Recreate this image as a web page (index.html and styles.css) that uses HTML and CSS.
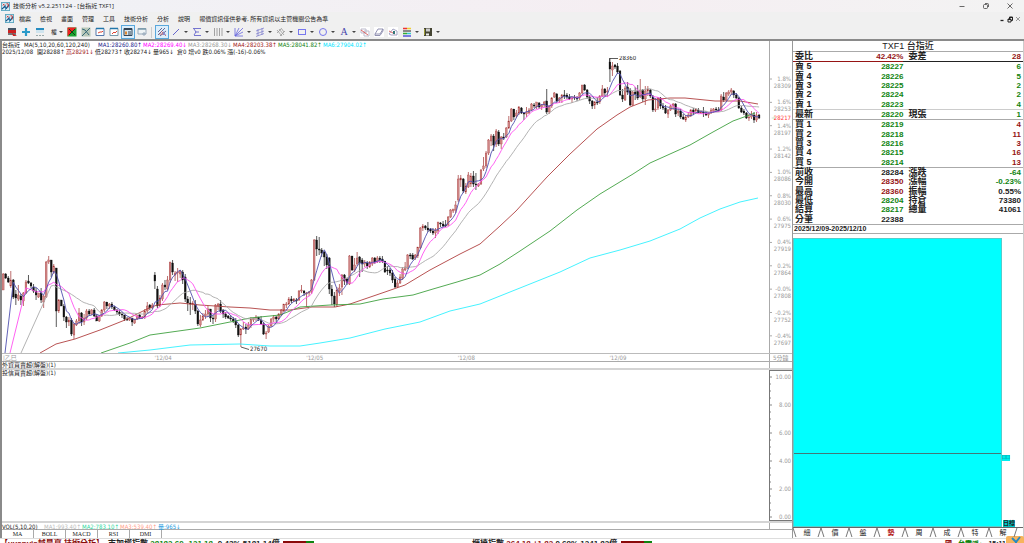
FILE: index.html
```html
<!DOCTYPE html>
<html lang="zh-Hant">

<head>
    <meta charset="UTF-8">
    <meta name="viewport" content="width=device-width, initial-scale=1.0">
    <title>技術分析 v5.2.251124 - [台指近 TXF1]</title>
    <link rel="stylesheet" href="styles.css">
</head>

<body>

    <!-- Shared icons -->
    <svg class="defs" aria-hidden="true">
        <symbol id="app" viewBox="0 0 10 10">
            <rect x=".5" y=".5" width="9" height="9" fill="#d5ecf4" stroke="#5aa6c0"/>
            <path d="M1 8L4 5L6 7L9 3" fill="none" stroke="#1c4f80" stroke-width="1.3"/>
            <path d="M2 2L4 4M4 2L2 4M6 2h2v4" fill="none" stroke="#c33" stroke-width="1"/>
            <path d="M3 6h4M5 3v6" stroke="#2577a8" stroke-width=".8"/>
        </symbol>
    </svg>

    <!-- Title Bar -->
    <header class="title-bar">
        <svg class="app-icon"><use href="#app"/></svg>
        <h1>技術分析 v5.2.251124 - [台指近 TXF1]</h1>
        <div class="window-buttons">
            <button aria-label="最小化"><svg viewBox="0 0 8 8"><path d="M1.5 4.5h5"/></svg></button>
            <button aria-label="還原"><svg viewBox="0 0 8 8"><rect x="1.5" y="2.5" width="4" height="4" rx="1"/><path d="M3 1.5h2.5q1 0 1 1V5"/></svg></button>
            <button aria-label="關閉"><svg viewBox="0 0 8 8"><path d="M1.5 1.5l5 5M6.5 1.5l-5 5"/></svg></button>
        </div>
    </header>

    <!-- Menu -->
    <nav class="menu-bar">
        <svg class="app-icon"><use href="#app"/></svg>
        <button>檔案</button>
        <button>檢視</button>
        <button>畫面</button>
        <button>管理</button>
        <button>工具</button>
        <button>技術分析</button>
        <button>分析</button>
        <button>說明</button>
        <span>報價資訊僅供參考, 所有資訊以主管機關公告為準</span>
        <div class="mdi-buttons">
            <button aria-label="最小化視窗"><svg viewBox="0 0 8 8"><path d="M2.5 5.5h3" stroke="#222" stroke-width="1.3"/></svg></button>
            <button aria-label="還原視窗"><svg viewBox="0 0 8 8"><path d="M2 4h3v3H2zM3.5 4V2h3v3.500H5M2 4.500h3M3.500 2.500h3" fill="none" stroke="#222"/></svg></button>
            <button aria-label="關閉視窗"><svg viewBox="0 0 8 8"><path d="M2 2l4 4M6 2l-4 4" stroke="#999"/></svg></button>
        </div>
    </nav>

    <!-- Toolbar -->
    <div class="toolbar">
        <button aria-label="報價"><svg viewBox="0 0 10 10"><path d="M1 1h8v2H1z" fill="#456"/><path d="M1 3h8v3H1z" fill="#c22"/><path d="M1 6h8v2H1z" fill="#777"/><path d="M5 6l5 3H6z" fill="#c22"/></svg></button>
        <button aria-label="新增"><svg viewBox="0 0 10 10"><path d="M5 1v8M1 5h8" stroke="#2b9ac9" stroke-width="2.200"/></svg></button>
        <button aria-label="視窗"><svg viewBox="0 0 10 10"><path d="M1 1h8v2H1z" fill="#268cc0"/><path d="M1 3h8v3H1z" fill="#cfe4ee"/><path d="M1 8.500h8" stroke="#9aa" stroke-dasharray="2 1"/></svg></button>
        <button class="short" aria-label="權值"><span>權</span><i></i></button>
        <button aria-label="漲跌"><svg viewBox="0 0 10 10"><path d="M.5.5h9v9h-9z" fill="#1ca332"/><path d="M.5.5h9l-9 9z" fill="#e22"/><path d="M2 2l6 6M8 2L2 8" stroke="#141" stroke-width="1"/></svg></button>
        <button aria-label="線圖"><svg viewBox="0 0 10 10"><path d="M.5.5h9v9h-9z" fill="#b9c8b9"/><path d="M1 9l8-8M1 2l3 1 4 5" fill="none" stroke="#386a78" stroke-width="1"/></svg></button>
        <button aria-label="分時"><svg viewBox="0 0 10 10"><path d="M1 1.500h8v7H1z" fill="#fff" stroke="#57a"/><path d="M1 1.500h8" stroke="#27a" stroke-width="1.500"/><path d="M3 6l2-1 2 0 1-1" fill="none" stroke="#d43"/></svg></button>
        <button aria-label="日線"><svg viewBox="0 0 10 10"><path d="M1 1.500h8v7H1z" fill="#fff" stroke="#79a"/><path d="M1 1.500h8" stroke="#27a" stroke-width="1.500"/><path d="M3 7l2-2 1 1 2-2" fill="none" stroke="#d43"/></svg></button>
        <button class="on" aria-label="資訊"><svg viewBox="0 0 10 10"><path d="M1 1.500h8v7H1z" fill="#d8e9f4" stroke="#345"/><path d="M1 2h8" stroke="#345" stroke-width="2"/><path d="M2 4.500h2v3H2z" fill="#d83"/><path d="M5 5h3M5 7h3" stroke="#345"/></svg></button>
        <button aria-label="列表"><svg viewBox="0 0 10 10"><path d="M1 1.500h8v5.500H1z" fill="#eef3f5" stroke="#9ab"/><path d="M1 2h8" stroke="#79a" stroke-width="1.500"/><path d="M7 5v4M5 7h4" stroke="#9ab"/></svg></button>
        <hr>
        <button class="on" aria-label="畫線"><svg viewBox="0 0 10 10"><path d="M1 8L8 1M1 5l4-4M3 9l6-5" stroke="#558" stroke-width=".9"/><path d="M2 7h6M4 4l5 5" stroke="#c55" stroke-width=".8"/><path d="M6 4l3 4H6z" fill="#88c"/></svg></button>
        <button class="drop" aria-label="直線"><svg viewBox="0 0 10 10"><path d="M2 8l6-6" stroke="#66c"/></svg><i></i></button>
        <button class="drop" aria-label="水平線"><svg viewBox="0 0 10 10"><path d="M1 1.500h8M3 5h4M2 8.500h7M2 2l2 3-2 3" fill="none" stroke="#66c" stroke-width=".9"/></svg><i></i></button>
        <button class="drop" aria-label="垂直線"><svg viewBox="0 0 10 10"><path d="M1.500 1v8M4 1v8M6.500 1v8M9 1v8" stroke="#999" stroke-width=".9"/></svg><i></i></button>
        <button class="drop" aria-label="扇形線"><svg viewBox="0 0 10 10"><path d="M1 1v8h8M1 9l8-8M1 9l4-8M1 9l8-4" fill="none" stroke="#66d" stroke-width=".8"/></svg><i></i></button>
        <button class="drop" aria-label="平行線"><svg viewBox="0 0 10 10"><path d="M1 4l8-3M1 7l8-3M1 9.500l8-3M3 2v7M7 1v7" stroke="#77c" stroke-width=".7"/></svg><i></i></button>
        <button class="drop" aria-label="角度線"><svg viewBox="0 0 10 10"><path d="M1 3l5 6M3 2l5 6M5 1l3 4M1 6l4-4M4 9l5-5" stroke="#999" stroke-width=".8"/></svg><i></i></button>
        <button class="drop" aria-label="矩形"><svg viewBox="0 0 10 10"><rect x="1.500" y="2.500" width="7" height="5" fill="none" stroke="#77e"/></svg><i></i></button>
        <button class="drop" aria-label="圓形"><svg viewBox="0 0 10 10"><circle cx="5" cy="5" r="3.500" fill="none" stroke="#77e"/></svg><i></i></button>
        <button class="drop letter" aria-label="文字"><span>A</span><i></i></button>
        <button aria-label="複製"><svg class="paper" viewBox="0 0 10 10"><path d="M1 2h5v4H1zM4 4h5v5H4z" fill="#fff" stroke="#bbc"/><path d="M1 3l7 5" stroke="#d66"/></svg></button>
        <button aria-label="橡皮擦"><svg class="paper" viewBox="0 0 10 10"><path d="M1 7l3-5h5L6 7zM1 7v1.500h5L9 4V2" fill="none" stroke="#88a" stroke-width=".9"/></svg></button>
        <button aria-label="全部清除"><svg class="paper" viewBox="0 0 10 10"><path d="M1 7l4-5 4 2v4H3z" fill="none" stroke="#99b" stroke-width=".9"/><path d="M1 4l6 3" stroke="#d66"/><path d="M5 4h2v3H5z" fill="#377"/></svg></button>
        <button class="drop" aria-label="顏色"><svg viewBox="0 0 10 10"><path d="M1 1.500h4" stroke="#e33" stroke-width="1.500"/><path d="M5 1.500h4" stroke="#ec3" stroke-width="1.500"/><path d="M1 4h8" stroke="#222"/><path d="M1 6.500h4" stroke="#3a3" stroke-width="1.500"/><path d="M5 6.500h4" stroke="#3cc" stroke-width="1.500"/><path d="M1 9h8" stroke="#55d" stroke-width="1.500"/></svg><i></i></button>
        <button class="drop" aria-label="儲存"><svg viewBox="0 0 10 10"><path d="M1 1h8v8H1z" fill="#443"/><path d="M3 1.500h4v3H3z" fill="#ccc"/><path d="M3 6.500h3v2H3z" fill="#eee"/><path d="M1.500 2v6" stroke="#993"/></svg><i></i></button>
    </div>

    <main class="workspace">

        <!-- Charts -->
        <section class="charts">
            <div class="price-row">
                <div class="price-chart">
                    <p class="legend">
                        <span class="symbol">台指近</span><span class="params">MA(5,10,20,60,120,240)</span>
                        <span class="ma navy">MA1:28260.80↑</span>
                        <span class="ma magenta">MA2:28269.40↓</span>
                        <span class="ma gray">MA3:28268.30↓</span>
                        <span class="ma maroon">MA4:28203.38↑</span>
                        <span class="ma green">MA5:28041.82↑</span>
                        <span class="ma cyan">MA6:27904.02↑</span>
                    </p>
                    <p class="legend">
                        <span class="date">2025/12/08</span>
                        <span class="quote">開28288↑</span>
                        <span class="quote maroon">高28291↓</span>
                        <span class="quote">低28273↑</span>
                        <span class="quote">收28274↓</span>
                        <span class="volume">量965↓</span>
                        <span class="rest">倉0 增v0 跌0.06% 漲(-16)-0.06%</span>
                    </p>
                    <svg id="candles" viewBox="2 56 767 297"></svg>
                </div>
                <svg id="price-axis" class="axis" viewBox="770 41 22 312"></svg>
            </div>
            <div class="strip dates">
                <div class="days">
                    <span>|乙巳</span><span>'12/04</span><span>'12/05</span><span>'12/08</span><span>'12/09</span>
                </div>
                <span class="cell">5分鐘</span>
            </div>
            <div class="strip study">
                <span>外資買賣超(解盤)(1)</span>
                <span class="cell"></span>
            </div>
            <div class="lower">
                <p>投信買賣超(解盤)(1)</p>
                <svg id="lower-axis" class="axis boxed" viewBox="770 371 22 149"></svg>
            </div>
            <div class="strip vol">
                <p class="legend">
                    <span class="vol-name">VOL(5,10,20)</span>
                    <span class="vol-ma light">MA1:993.40↑</span>
                    <span class="vol-ma mint">MA2:783.10↑</span>
                    <span class="vol-ma salmon">MA3:539.40↑</span>
                    <span class="sky">量:965↓</span>
                </p>
                <span class="cell"></span>
            </div>
            <div class="study-tabs">
                <button>MA</button>
                <button>BOLL</button>
                <button>MACD</button>
                <button>RSI</button>
                <button>DMI</button>
            </div>
        </section>

        <!-- Quote Panel -->
        <aside class="quote-panel">
            <h2>TXF1 台指近</h2>
            <table>
                <tbody>
                    <tr class="ratio"><th>委比</th><td class="up">42.42%</td><th>委差</th><td class="up">28</td></tr>
                    <tr><th>賣 5</th><td class="down">28227</td><th></th><td class="down">6</td></tr>
                    <tr><th>賣 4</th><td class="down">28226</td><th></th><td class="down">5</td></tr>
                    <tr><th>賣 3</th><td class="down">28225</td><th></th><td class="down">2</td></tr>
                    <tr><th>賣 2</th><td class="down">28224</td><th></th><td class="down">2</td></tr>
                    <tr class="soft-line"><th>賣 1</th><td class="down">28223</td><th></th><td class="down">4</td></tr>
                    <tr class="line"><th>最新</th><td class="down">28220</td><th>現張</th><td class="down">1</td></tr>
                    <tr><th>買 1</th><td class="down">28219</td><th></th><td class="up">4</td></tr>
                    <tr><th>買 2</th><td class="down">28218</td><th></th><td class="up">11</td></tr>
                    <tr><th>買 3</th><td class="down">28216</td><th></th><td class="up">3</td></tr>
                    <tr><th>買 4</th><td class="down">28215</td><th></th><td class="up">16</td></tr>
                    <tr class="line"><th>買 5</th><td class="down">28214</td><th></th><td class="up">13</td></tr>
                    <tr><th>前收</th><td>28284</th><th>漲跌</th><td class="down">-64</td></tr>
                    <tr><th>今開</th><td class="up">28350</td><th>漲幅</th><td class="down">-0.23%</td></tr>
                    <tr><th>最高</th><td class="up">28360</td><th>振幅</th><td>0.55%</td></tr>
                    <tr><th>最低</th><td class="down">28204</td><th>持倉</th><td>73380</td></tr>
                    <tr><th>結算</th><td class="down">28217</td><th>總量</th><td>41061</td></tr>
                    <tr class="line"><th>分筆</th><td>22388</td><th></th><td></td></tr>
                </tbody>
            </table>
            <p class="range">2025/12/09-2025/12/10</p>
            <div class="trend">
                <div class="trend-fill">
                    <div class="trend-top"></div>
                </div>
                <div class="trend-side">
                    <span class="mark">囗囗</span>
                    <span class="day">日線</span>
                </div>
            </div>
            <div class="panel-tabs">
                <button>細</button>
                <button>價</button>
                <button>盤</button>
                <button class="active">勢</button>
                <button>周</button>
                <button>成</button>
                <button>特</button>
                <button>解</button>
            </div>
        </aside>

    </main>

    <!-- Status Bar -->
    <footer class="status-bar">
        <span class="brand">【yuanvis越是贏 技術分析】</span>
        <span class="index">市加權指數 <b class="down">28182.60 -121.18</b> -0.43% 5181.14億</span>
        <span class="meter"></span>
        <span class="index second">櫃檯指數 <b class="up">264.18 +1.82</b> 0.69% 1241.82億</span>
        <span class="meter"></span>
        <span class="tray"><b class="up">國</b><b class="down">台電派↓</b><b>15:11</b></span>
        <svg class="logo" viewBox="0 0 18 12"><rect width="18" height="12" rx="2" fill="#f7b45c"/><path d="M6 2l4 4 4-5M10 6v6" fill="none" stroke="#2a8ac0" stroke-width="2"/></svg>
    </footer>

    <script src="script.js"></script>

</body>

</html>
```
FILE: styles.css
```css
/* General Reset */
* {
    margin: 0;
    padding: 0;
    box-sizing: border-box;
}

body {
    display: flex;
    flex-direction: column;
    height: 100vh;
    overflow: hidden;
    background-color: white;
    color: #222;
    font-family: "Open Sans", "Noto Sans CJK TC", sans-serif;
    font-size: 6px;
    line-height: 8px;
}

button {
    border: none;
    background: none;
    font: inherit;
    color: inherit;
    white-space: nowrap;
}

.defs {
    position: absolute;
    width: 0;
    height: 0;
}

.app-icon {
    width: 9px;
    height: 9px;
    flex: none;
}

/* Title Bar */
.title-bar {
    display: flex;
    align-items: center;
    flex: none;
    height: 12px;
    padding-left: 1px;
    gap: 3px;
    background: linear-gradient(to right, #f0f2f6, #f5eef2 60%, #f3f3f3);
}

.title-bar h1 {
    font-size: 6px;
    font-weight: normal;
}

.window-buttons {
    display: flex;
    margin-left: auto;
    gap: 8px;
    padding-right: 6px;
}

.window-buttons button {
    width: 16px;
    height: 10px;
}

.window-buttons svg,
.mdi-buttons svg {
    display: block;
    width: 8px;
    height: 8px;
    margin: 0 auto;
}

.window-buttons svg {
    fill: none;
    stroke: #444;
    stroke-width: 0.8;
}

/* Menu */
.menu-bar {
    display: flex;
    align-items: center;
    flex: none;
    height: 13px;
    padding-left: 5px;
    gap: 9px;
    background-color: #f0f0f0;
}

.menu-bar .app-icon {
    margin-right: -4px;
}

.mdi-buttons {
    display: flex;
    margin-left: auto;
    padding-right: 2px;
}

/* Toolbar */
.toolbar {
    display: flex;
    align-items: center;
    flex: none;
    height: 16px;
    padding: 0 5px;
    background-color: #f0f0f0;
    border-bottom: 2px solid #8a8a8a;
}

.toolbar button {
    display: flex;
    align-items: center;
    width: 14px;
    height: 14px;
    padding-left: 2px;
}

.toolbar button svg {
    width: 10px;
    height: 10px;
    flex: none;
}

.toolbar button span {
    width: 10px;
    text-align: center;
}

.toolbar .short {
    width: 18px;
}

.toolbar .drop {
    width: 21px;
}

.toolbar .short i,
.toolbar .drop i {
    border: 2px solid transparent;
    border-top-color: #444;
    border-bottom: none;
}

.toolbar .drop i {
    margin-left: 3px;
}

.toolbar .on {
    padding-left: 1px;
    border: 1px solid #5aa8dc;
    background-color: #dceefb;
}

.toolbar .letter span {
    font-family: "Liberation Serif", serif;
    font-size: 10px;
    color: #44a;
}

.toolbar .paper {
    background-color: white;
}

.toolbar hr {
    width: 1px;
    height: 11px;
    margin: 0 3px 0 2px;
    border: none;
    background-color: #ccc;
}

/* Workspace */
.workspace {
    display: grid;
    grid-template-columns: 1fr 232px;
    height: calc(100vh - 46px);
    flex: none;
}

.charts {
    display: flex;
    flex-direction: column;
    min-width: 0;
    border-left: 2px solid #8a8a8a;
    font-family: "DejaVu Sans Condensed", "Liberation Sans", "Noto Sans CJK TC", sans-serif;
}

.price-row {
    display: flex;
    flex: none;
}

.price-chart {
    flex: 1;
    min-width: 0;
}

.price-chart svg {
    display: block;
    width: 100%;
}

.legend {
    display: flex;
    white-space: nowrap;
    line-height: 8px;
}

.price-chart .legend:first-child {
    line-height: 7px;
}

.symbol {
    width: 22px;
}

.params {
    width: 74px;
}

.ma {
    width: 45px;
}

.date {
    width: 35px;
}

.quote {
    width: 29px;
}

.volume {
    width: 24px;
}

.navy { color: #22228c; }
.magenta { color: #f0f; }
.gray { color: #999; }
.maroon { color: #a01818; }
.green { color: #108010; }
.cyan { color: #00e5ff; }
.light { color: #bbb; }
.mint { color: #2ed8a0; }
.salmon { color: #ffa08c; }
.sky { color: #1c9ae0; }

.axis {
    flex: none;
    width: 23px;
    border-left: 1px solid #aaa;
    font-size: 6px;
    fill: #999;
}

#candles text {
    font-size: 6px;
    fill: #222;
}

.strip {
    display: flex;
    flex: none;
    height: 8px;
    border-bottom: 1px solid #aaa;
}

.strip .cell {
    width: 23px;
    margin-left: auto;
    padding-left: 3px;
    border-left: 1px solid #aaa;
}

.dates {
    height: 9px;
    border-top: 1px solid #bbb;
    color: #999;
    line-height: 7px;
}

.days {
    display: grid;
    grid-template-columns: repeat(5, 1fr);
    flex: 1;
    padding: 0 8px 0 1px;
}

.study {
    border-bottom: 2px solid #d4d4d4;
    line-height: 6px;
}

.lower {
    display: flex;
    justify-content: space-between;
    flex: 1;
    min-height: 0;
    line-height: 6px;
}

.boxed {
    height: 100%;
    border: 1px solid #777;
    border-right: none;
}

.vol {
    height: 9px;
    border-top: 2px solid #d4d4d4;
}

.vol-name {
    width: 42px;
}

.vol-ma {
    width: 38px;
}

/* Indicator Tabs */
.study-tabs {
    display: flex;
    flex: none;
    height: 8px;
    font-family: "Liberation Serif", serif;
    line-height: 8px;
}

.study-tabs button {
    width: 32px;
    border-right: 1px solid #aaa;
}

/* Quote Panel */
.quote-panel {
    display: flex;
    flex-direction: column;
    min-width: 0;
    border-left: 1px solid #999;
    border-right: 1px solid #ccc;
    font-family: "Liberation Sans", "Noto Sans CJK TC", sans-serif;
}

.quote-panel h2 {
    flex: none;
    height: 11px;
    border-bottom: 1px solid #aaa;
    font-size: 9px;
    font-weight: 500;
    line-height: 10px;
    text-align: center;
}

.quote-panel table {
    width: 100%;
    height: 173px;
    border-collapse: collapse;
    table-layout: fixed;
    font-size: 8px;
    font-weight: bold;
    line-height: 9px;
}

.quote-panel th {
    width: 22%;
    padding-left: 2px;
    font-size: 9px;
    font-weight: bold;
    text-align: left;
    white-space: nowrap;
}

.quote-panel td {
    width: 26%;
    text-align: right;
}

.quote-panel td:last-child {
    width: auto;
    padding-right: 2px;
}

.quote-panel th:nth-child(3) {
    padding-left: 5px;
}

.up { color: #961414; }
.down { color: #108410; }

.line > * {
    border-bottom: 1px solid #aaa;
}

.soft-line > * {
    border-bottom: 1px solid #ccc;
}

.ratio > * {
    border-bottom: 1px solid #222;
}

.ratio > :nth-child(-n+2) {
    border-bottom-color: #961414;
}

.range {
    flex: none;
    height: 9px;
    padding-left: 1px;
    border-bottom: 1px solid #aaa;
    font-size: 7px;
    font-weight: bold;
    line-height: 8px;
}

.trend {
    display: flex;
    flex: 1;
    min-height: 0;
    padding-top: 4px;
    border-bottom: 1px solid #666;
}

.trend-fill {
    flex: 1;
    border: 1px solid #5cc;
    background-color: cyan;
}

.trend-top {
    height: 75%;
    border-bottom: 1px solid #477;
}

.trend-side {
    display: flex;
    flex-direction: column;
    justify-content: space-between;
    width: 21px;
    padding-top: 217px;
}

.mark {
    width: 8px;
    background-color: #0ee;
    color: #088;
    font-size: 4px;
    line-height: 6px;
    white-space: nowrap;
}

.day {
    width: 12px;
    margin-left: 1px;
    background-color: #0cc;
    font-weight: bold;
    line-height: 7px;
}

.panel-tabs {
    display: flex;
    flex: none;
    height: 10px;
}

.panel-tabs button {
    position: relative;
    width: 28px;
    height: 9px;
    font-size: 7px;
    line-height: 9px;
}

.panel-tabs button::before,
.panel-tabs button::after {
    content: "";
    position: absolute;
    top: 0;
    left: 1px;
    width: 1px;
    height: 9px;
    background-color: #777;
    transform: skewX(18deg);
}

.panel-tabs button::after {
    left: auto;
    right: 1px;
    transform: skewX(-18deg);
}

.panel-tabs .active {
    color: #b01010;
    font-weight: bold;
}

/* Status Bar */
.status-bar {
    display: flex;
    flex: none;
    height: 12px;
    border-top: 1px solid #ddd;
    font-family: "Liberation Sans", "Noto Sans CJK TC", sans-serif;
    font-size: 8px;
    line-height: 10px;
    white-space: nowrap;
    font-weight: bold;
}

.brand {
    width: 108px;
    color: #8a0a0a;
}

.index {
    width: 175px;
}

.meter {
    width: 31px;
    height: 12px;
    margin-top: 2px;
    background: linear-gradient(to right, #8a0a0a 75%, #108410 75%);
}

.second {
    width: 149px;
    margin-left: 158px;
}

.tray {
    display: flex;
    gap: 6px;
    margin-left: auto;
    font-size: 7px;
}

.logo {
    width: 18px;
    height: 12px;
    margin-top: -3px;
}
```
FILE: script.js
```js
// Five minute bars as chart heights: open, high, low, close
const bars = `
290 273 290 274|274 273 279 278|278 276 283 282|286 271 288 280|280 279 299 297|294 290 305 298|299 285 301 295|296 294 305 300|301 292 306 293|293 280 294 282
281 275 284 283|283 282 288 286|287 284 293 291|291 288 300 295|297 293 298 293|293 288 303 300|302 295 308 296|297 261 298 262|262 256 264 260|260 260 277 272
272 264 274 266|268 268 327 311|311 299 313 300|300 300 306 306|306 304 321 317|317 316 328 322|322 317 326 320|320 318 336 334|335 323 339 324|325 319 326 321
321 308 324 313|313 312 326 322|322 314 325 318|318 309 320 311|311 309 316 314|314 309 315 310|310 308 317 316|316 314 321 321|321 315 322 316|316 309 317 310
310 301 312 302|302 302 309 306|306 303 309 304|304 302 309 307|307 306 311 310|310 309 314 312|312 310 316 314|314 312 318 315|315 315 321 319|319 317 321 320
320 317 321 318|318 318 326 322|323 319 324 319|319 315 320 316|315 314 319 318|318 316 319 317|317 309 319 311|311 302 313 306|305 304 310 308|308 303 309 305
275 272 289 281|289 286 308 306|306 295 307 298|299 283 301 285|285 280 290 287|289 276 290 280|280 262 283 262|263 260 275 272|275 271 281 273|273 268 282 272
274 270 278 271|272 270 284 280|277 274 302 299|299 296 311 303|303 297 315 304|304 301 310 303|304 300 314 311|311 310 326 324|325 315 327 320|320 313 321 316
316 310 319 314|314 306 317 309|309 309 322 318|318 315 324 319|319 304 322 305|306 303 310 304|304 300 313 311|310 309 318 314|314 312 319 317|316 315 319 318
318 315 321 319|319 317 323 321|321 318 328 325|325 324 337 335|335 328 347 329|329 322 330 328|327 324 334 329|329 322 330 325|325 317 328 319|320 318 322 318
318 315 321 317|317 317 321 320|320 316 325 324|324 322 335 334|334 331 339 333|332 325 333 326|326 318 327 319|319 315 322 317|317 316 322 319|319 313 320 314
315 309 316 310|311 304 312 304|305 302 308 304|304 297 305 299|299 296 303 301|301 298 302 299|300 298 304 300|300 290 301 291|291 285 293 290|291 290 296 293
294 292 307 293|293 291 296 292|292 279 294 280|280 239 281 240|240 236 256 249|249 237 255 250|250 248 257 253|252 251 266 257|257 254 269 265|258 257 294 289
289 285 305 296|296 292 307 304|305 287 307 290|291 284 296 288|287 274 295 275|275 274 285 281|279 278 285 283|284 255 285 256|256 256 271 270|270 258 272 265
264 252 266 258|257 256 277 263|260 258 272 264|264 260 267 262|263 261 269 266|267 261 268 262|264 257 266 258|258 257 264 262|262 256 263 258|258 256 263 260
259 256 263 261|261 261 273 272|270 266 275 271|270 268 276 273|273 270 283 280|279 277 288 287|287 280 288 283|283 274 284 277|278 267 280 269|270 262 271 267
268 254 269 255|255 253 259 256|255 253 260 259|258 254 260 255|256 247 258 247|248 227 249 228|228 224 231 226|226 225 230 228|228 222 232 230|229 228 233 231
231 228 235 233|233 228 238 230|231 222 234 222|223 222 227 224|224 221 227 226|225 220 227 225|225 216 226 217|217 209 218 210|211 209 213 209|210 201 213 205
200 175 202 179|180 175 187 178|179 178 193 191|192 183 194 186|187 172 188 175|184 173 187 176|176 171 187 184|184 173 190 185|186 183 187 184|184 169 185 170
169 157 171 166|166 151 168 153|153 139 155 140|141 134 146 136|136 134 151 145|144 129 147 131|132 130 146 144|144 136 149 137|137 133 140 138|137 127 138 128
128 116 129 121|121 108 122 109|109 109 120 117|116 110 118 113|113 106 115 107|108 107 114 113|113 112 120 114|114 107 117 112|113 108 114 110|110 103 111 104
105 103 108 105|107 102 109 102|103 102 109 107|107 104 110 105|105 101 107 102|101 89 114 112|112 105 114 106|106 97 108 98|97 92 98 93|94 93 103 101
101 97 103 98|98 94 103 95|95 90 99 95|95 93 99 97|97 94 100 99|99 96 103 98|97 95 100 98|98 96 101 99|98 92 100 93|93 85 94 85
85 84 91 90|90 89 99 97|97 95 104 101|101 100 109 106|105 101 109 102|102 97 105 102|102 95 104 96|96 85 97 89|89 88 96 93|92 87 97 91
62 58 82 69|70 62 76 66|65 64 69 67|66 63 74 72|71 70 96 95|95 89 102 99|100 86 101 88|87 82 95 92|90 88 106 105|105 91 106 92
92 87 100 94|91 85 100 98|97 79 98 90|90 89 102 99|99 86 105 91|91 86 96 89|90 89 98 96|96 95 112 110|110 98 112 109|108 97 110 98
98 97 109 106|106 103 110 108|108 105 114 113|114 109 118 110|110 105 111 106|106 103 110 104|104 103 117 114|113 109 116 111|111 109 119 117|117 114 120 119
120 115 122 117|117 112 118 115|116 109 117 110|110 108 115 113|111 108 114 109|110 108 113 113|113 110 114 112|112 107 117 113|113 111 116 115|115 112 118 113
113 108 114 110|111 108 113 109|109 107 112 110|110 107 112 111|110 94 111 96|97 92 102 100|100 92 101 93|94 90 96 92|92 88 95 90|91 90 98 95
95 93 99 98|98 97 109 108|108 106 113 112|111 109 115 113|113 112 119 118|118 114 121 117|117 111 119 114|115 112 123 120|120 112 122 115|115 114 119 118
`.trim().split(/[|\n]/).map(bar => bar.split(" ").map(Number));

const step = 2.528;
const barX = i => 3.2 + i * step;

// Long averages
const slowLines = [
    ["#b04040", "40,353 56,344 75,339 100,330 125,320 147,309 157,305 180,303 200,305 230,307 250,308 270,310 290,310 312,307 335,307 350,304 385,292 405,285 430,270 460,254 480,244 500,226 516,211 547,177 570,154 597,129 617,115 630,107 648,100 670,98 685,98 715,101 740,101 758,104"],
    ["#40a040", "101,353 130,343 150,335 200,328 250,318 280,315 300,307 330,305 360,304 383,299 413,295 433,289 457,282 480,275 500,264 520,251 550,231 577,210 600,194 633,174 650,163 690,145 713,132 733,121 755,113"],
    ["#30f0ff", "118,353 150,350 190,345 240,344 270,346 300,346 320,343 350,338 385,329 420,322 450,311 480,304 500,296 520,288 560,272 590,258 620,250 650,241 680,229 700,218 720,209 740,202 758,198"]
];

function line(points, color) {
    return `<polyline points="${points}" fill="none" stroke="${color}" stroke-width=".9"/>`;
}

// Average of the last n closes, rising from the floor until n bars exist
function average(n, start) {
    const points = [`${start},353`];
    for (let i = n - 1; i < bars.length; i++) {
        let sum = 0;
        for (let k = 0; k < n; k++) {
            sum += bars[i - k][3];
        }
        points.push(`${barX(i).toFixed(1)},${(sum / n).toFixed(1)}`);
    }
    return points.join(" ");
}

function drawCandles() {
    let out = "";
    bars.forEach(([open, high, low, close], i) => {
        const x = barX(i);
        const up = close < open;
        const color = up ? "#a03030" : "#111";
        const top = Math.min(open, close);
        const height = Math.max(1, Math.abs(open - close));
        out += `<path d="M${x} ${high}V${low}" stroke="${color}" stroke-width=".7"/>`;
        out += `<rect x="${x - 0.9}" y="${top}" width="1.8" height="${height}" fill="${up ? "#cf8585" : "#111"}" stroke="${color}" stroke-width=".3"/>`;
    });
    slowLines.forEach(([color, points]) => out += line(points, color));
    out += line(average(20, 21), "#aaa");
    out += line(average(10, 10), "#ff50f0");
    out += line(average(5, 5), "#5050b0");
    out += `<path d="M609.500 62V58.500H618M241 347L249 349.500" fill="none" stroke="#333" stroke-width=".8"/>`;
    out += `<text x="619" y="60">28360</text><text x="250" y="351">27670</text>`;
    document.getElementById("candles").innerHTML = out;
}

function drawPriceAxis() {
    const prices = [28309, 28253, 28197, 28142, 28086, 28030, 27975, 27919, 27864, 27808, 27752, 27697];
    const rates = ["1.8%", "1.6%", "1.4%", "1.2%", "1.0%", "0.8%", "0.6%", "0.4%", "0.2%", "-0.0%", "-0.2%", "-0.4%"];
    let out = "";
    prices.forEach((price, i) => {
        const y = 79 + i * 23.35;
        out += `<path d="M770 ${y}h2" stroke="#aaa"/>`;
        out += `<text x="791" y="${y + 2}" text-anchor="end">${rates[i]}</text>`;
        out += `<text x="791" y="${y + 9}" text-anchor="end">${price}</text>`;
    });
    out += `<path d="M771 118l4 -2v4z" fill="#dfeedd"/><text x="791" y="120" text-anchor="end" fill="#f33">28217</text>`;
    document.getElementById("price-axis").innerHTML = out;
}

function drawLowerAxis() {
    let out = "";
    for (let i = 0; i <= 20; i++) {
        const y = 377 + i * 7;
        out += `<path d="M770 ${y}h${i % 4 ? 1 : 2}" stroke="#888"/>`;
        if (i % 4 === 0) {
            out += `<text x="791" y="${y + 2}" text-anchor="end">${(10 - i / 2).toFixed(2)}</text>`;
        }
    }
    document.getElementById("lower-axis").innerHTML = out;
}

drawCandles();
drawPriceAxis();
drawLowerAxis();
```
